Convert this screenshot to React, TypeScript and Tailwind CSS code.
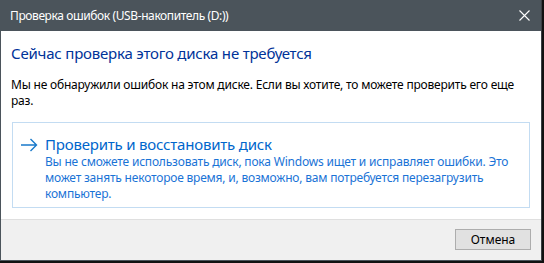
import React from 'react';

const font = { fontFamily: '"Noto Sans", "Open Sans", sans-serif' };

const App: React.FC = () => {
  return (
    <div className="w-[544px] h-[263px] bg-[#111111] overflow-hidden" style={font}>
      <div className="w-[542px] h-[261px] flex flex-col border-l border-r border-b border-l-[#4b545b] border-r-[#3a3f44] border-b-[#4b545b] bg-white">
        {/* Title bar */}
        <div className="h-[31px] shrink-0 bg-[#4b545b] flex items-center justify-between pl-[9px] pr-[10px]">
          <span className="text-[12px] text-white leading-none tracking-[-0.4px]">Проверка ошибок (USB-накопитель (D:))</span>
          <svg width="11" height="11" viewBox="0 0 11 11" className="mr-[1px]">
            <path d="M0.5 0.5 L10.5 10.5 M10.5 0.5 L0.5 10.5" stroke="#ffffff" strokeWidth="1.1" />
          </svg>
        </div>

        {/* Content */}
        <div className="flex-1 px-[10px] pt-[12px]">
          <h1 className="text-[15px] leading-[20px] text-[#003399] tracking-[-0.2px]">Сейчас проверка этого диска не требуется</h1>
          <p className="mt-[14px] text-[12px] leading-[16px] text-black tracking-[-0.2px]">
            Мы не обнаружили ошибок на этом диске. Если вы хотите, то можете проверить его еще раз.
          </p>
          <div className="mt-[13px] ml-[1px] mr-[1px] h-[86px] border border-[#c3dcf2] flex pt-[11px] pl-[7px] pr-[6px]">
            <svg width="18" height="14" viewBox="0 0 18 14" className="mt-[4px] shrink-0">
              <path d="M1 7 H16.5 M10.5 1 L16.5 7 L10.5 13" stroke="#1979ca" strokeWidth="1.4" fill="none" />
            </svg>
            <div className="ml-[7px]">
              <div className="text-[15px] leading-[20px] text-[#0066cc] tracking-[-0.2px]">Проверить и восстановить диск</div>
              <div className="text-[12px] leading-[16px] text-[#1a73d6] tracking-[-0.2px]">
                Вы не сможете использовать диск, пока Windows ищет и исправляет ошибки. Это может занять некоторое время, и, возможно, вам потребуется перезагрузить компьютер.
              </div>
            </div>
          </div>
        </div>

        {/* Footer */}
        <div className="h-[41px] shrink-0 bg-[#f0f0f0] border-t border-[#dfdfdf] flex items-start justify-end pt-[9px] pr-[10px]">
          <button className="w-[76px] h-[21px] bg-[#e1e1e1] border border-[#adadad] text-[12px] leading-none text-black">
            Отмена
          </button>
        </div>
      </div>
    </div>
  );
};

export default App;
